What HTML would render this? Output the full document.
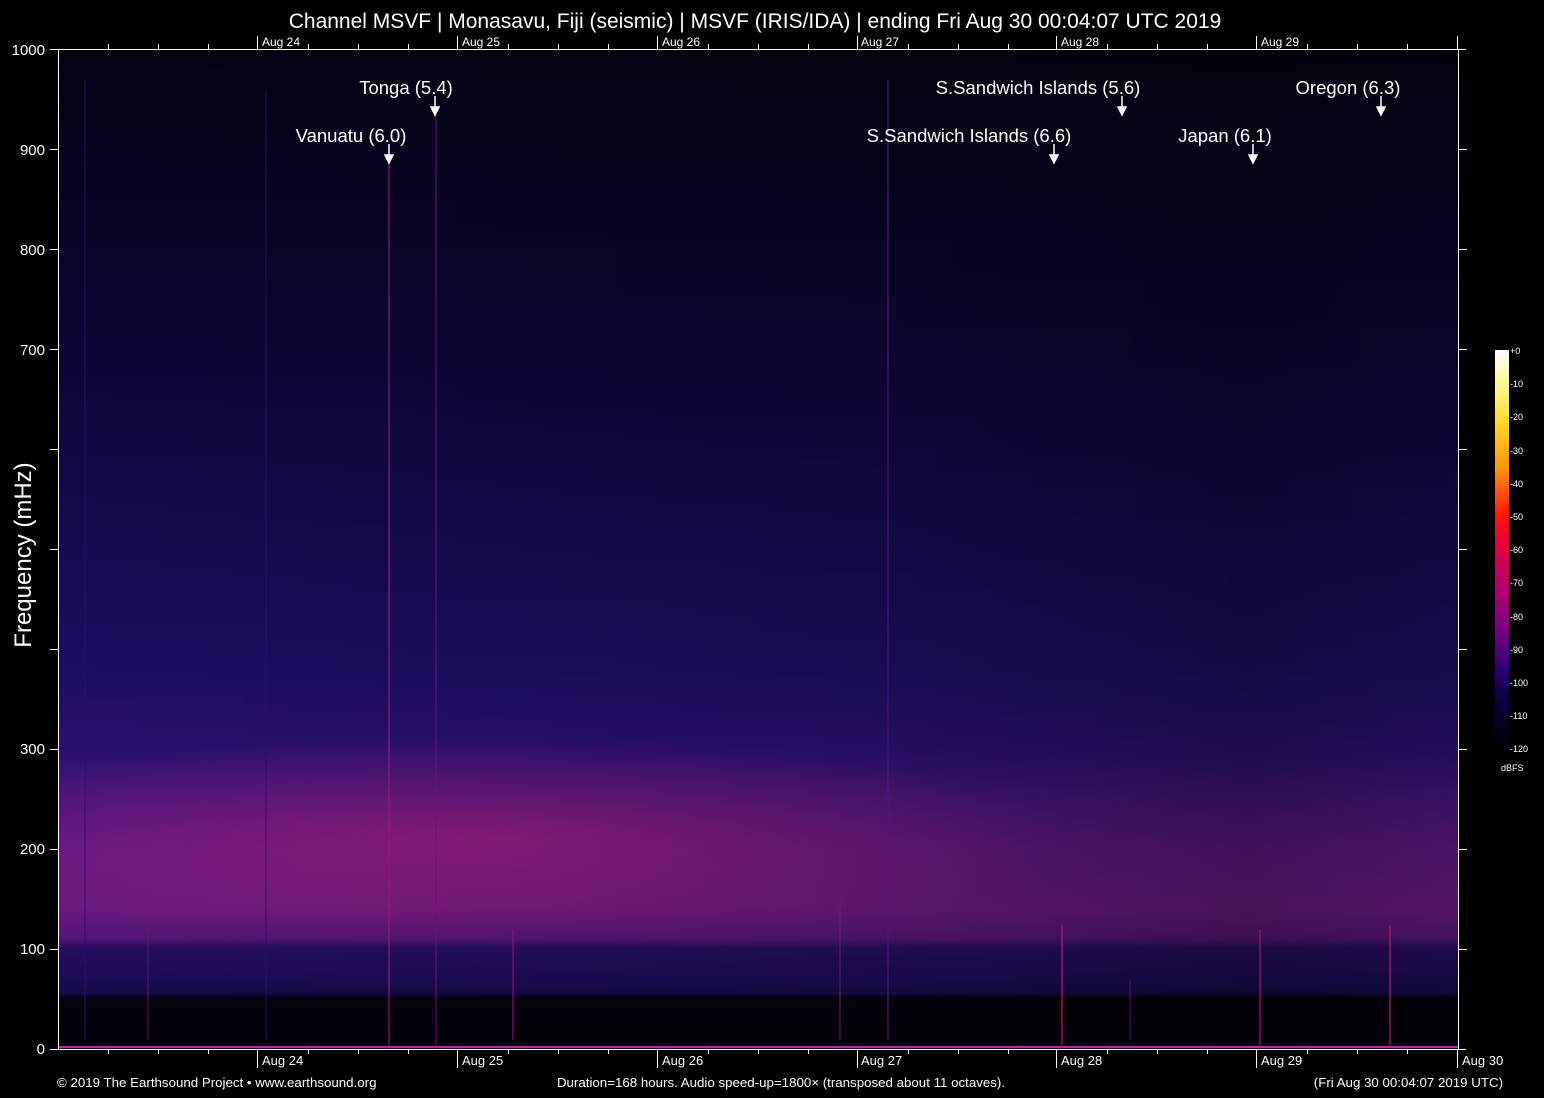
<!DOCTYPE html>
<html><head><meta charset="utf-8"><style>
html,body{margin:0;padding:0;background:#000;}
svg{display:block}
text{font-family:"Liberation Sans",Arial,sans-serif;fill:#fff}
</style></head><body>
<svg width="1544" height="1098" viewBox="0 0 1544 1098" xmlns="http://www.w3.org/2000/svg">
<defs>
<linearGradient id="v" x1="0" y1="0" x2="0" y2="1">
<stop offset="0" stop-color="#030210"/>
<stop offset="0.05" stop-color="#050318"/>
<stop offset="0.3" stop-color="#0b0634"/>
<stop offset="0.5" stop-color="#140b50"/>
<stop offset="0.62" stop-color="#1c0e60"/>
<stop offset="0.7" stop-color="#2a1070"/>
<stop offset="0.75" stop-color="#44167a"/>
<stop offset="0.8" stop-color="#5c1880"/>
<stop offset="0.86" stop-color="#681a7e"/>
<stop offset="0.89" stop-color="#541676"/>
<stop offset="0.9" stop-color="#260e5e"/>
<stop offset="0.93" stop-color="#1c0c56"/>
<stop offset="0.945" stop-color="#160a48"/>
<stop offset="0.95" stop-color="#04020c"/>
<stop offset="1" stop-color="#020108"/>
</linearGradient>
<radialGradient id="r" cx="480" cy="840" r="420" gradientUnits="userSpaceOnUse" gradientTransform="translate(480 840) scale(1.4 0.25) translate(-480 -840)">
<stop offset="0" stop-color="#c0207a" stop-opacity="0.5"/>
<stop offset="1" stop-color="#c0207a" stop-opacity="0"/>
</radialGradient>
<linearGradient id="h" x1="0" y1="0" x2="1" y2="0">
<stop offset="0" stop-color="#000" stop-opacity="0"/>
<stop offset="0.6" stop-color="#000" stop-opacity="0.15"/>
<stop offset="0.85" stop-color="#000" stop-opacity="0.3"/>
<stop offset="1" stop-color="#000" stop-opacity="0.2"/>
</linearGradient>
<linearGradient id="cb" x1="0" y1="0" x2="0" y2="1">
<stop offset="0" stop-color="#ffffff"/>
<stop offset="0.1" stop-color="#fff680"/>
<stop offset="0.2" stop-color="#ffd020"/>
<stop offset="0.3" stop-color="#ff9010"/>
<stop offset="0.42" stop-color="#ff1010"/>
<stop offset="0.5" stop-color="#e00040"/>
<stop offset="0.6" stop-color="#b00070"/>
<stop offset="0.7" stop-color="#780080"/>
<stop offset="0.8" stop-color="#300070"/>
<stop offset="0.88" stop-color="#080040"/>
<stop offset="1" stop-color="#000000"/>
</linearGradient>
</defs>
<text x="755" y="28" font-size="21" text-anchor="middle">Channel MSVF | Monasavu, Fiji (seismic) | MSVF (IRIS/IDA) | ending Fri Aug 30 00:04:07 UTC 2019</text>
<rect x="58" y="49" width="1400" height="999" fill="url(#v)"/>
<rect x="58" y="700" width="1400" height="250" fill="url(#r)"/>
<rect x="58" y="49" width="1400" height="999" fill="url(#h)"/>
<g stroke-width="1.5">
<line x1="389" y1="150" x2="389" y2="1045" stroke="#a01470" opacity="0.8"/>
<line x1="436" y1="110" x2="436" y2="1045" stroke="#6a1280" opacity="0.7"/>
<line x1="888" y1="80" x2="888" y2="1040" stroke="#5a1280" opacity="0.7"/>
<line x1="85" y1="80" x2="85" y2="1040" stroke="#2a1070" opacity="0.6"/>
<line x1="266" y1="90" x2="266" y2="1040" stroke="#2a1070" opacity="0.6"/>
<line x1="513" y1="930" x2="513" y2="1040" stroke="#8a1878" opacity="0.7"/>
<line x1="148" y1="930" x2="148" y2="1040" stroke="#6a1478" opacity="0.6"/>
<line x1="840" y1="900" x2="840" y2="1040" stroke="#7a1878" opacity="0.6"/>
<line x1="1062" y1="925" x2="1062" y2="1045" stroke="#b02070" opacity="0.8"/>
<line x1="1260" y1="930" x2="1260" y2="1045" stroke="#9a1a78" opacity="0.8"/>
<line x1="1390" y1="925" x2="1390" y2="1045" stroke="#b02070" opacity="0.8"/>
<line x1="1130" y1="980" x2="1130" y2="1040" stroke="#5a1280" opacity="0.6"/>
</g>
<line x1="58" y1="1047" x2="1458" y2="1047" stroke="#c020c0" stroke-width="2"/>
<g stroke="#fff" stroke-width="1" fill="none">
<line x1="58.5" y1="49" x2="58.5" y2="1049"/>
<line x1="1458.5" y1="49" x2="1458.5" y2="1049"/>
<line x1="58" y1="49.5" x2="1466" y2="49.5"/>
<line x1="50" y1="1049.5" x2="1466" y2="1049.5"/>
<path d="M50 49.5h8M50 149.5h8M50 249.5h8M50 349.5h8M50 449.5h8M50 549.5h8M50 649.5h8M50 749.5h8M50 849.5h8M50 949.5h8M1458 149.5h9M1458 249.5h9M1458 349.5h9M1458 449.5h9M1458 549.5h9M1458 649.5h9M1458 749.5h9M1458 849.5h9M1458 949.5h9"/>
<path d="M108.5 1049v5M158.5 1049v5M208.5 1049v5M308.5 1049v5M358.5 1049v5M408.5 1049v5M508.5 1049v5M558.5 1049v5M608.5 1049v5M708.5 1049v5M758.5 1049v5M808.5 1049v5M908.5 1049v5M958.5 1049v5M1008.5 1049v5M1107.5 1049v5M1157.5 1049v5M1207.5 1049v5M1307.5 1049v5M1357.5 1049v5M1407.5 1049v5"/>
<path d="M257.5 1049v19M457.5 1049v19M657.5 1049v19M857.5 1049v19M1056.5 1049v19M1256.5 1049v19M1457.5 1049v19"/>
<path d="M108.5 49v-5M158.5 49v-5M208.5 49v-5M308.5 49v-5M358.5 49v-5M408.5 49v-5M508.5 49v-5M558.5 49v-5M608.5 49v-5M708.5 49v-5M758.5 49v-5M808.5 49v-5M908.5 49v-5M958.5 49v-5M1008.5 49v-5M1107.5 49v-5M1157.5 49v-5M1207.5 49v-5M1307.5 49v-5M1357.5 49v-5M1407.5 49v-5"/>
<path d="M257.5 49v-13M457.5 49v-13M657.5 49v-13M857.5 49v-13M1056.5 49v-13M1256.5 49v-13M1457.5 49v-13"/>
</g>
<g font-size="15" text-anchor="end">
<text x="45" y="55">1000</text><text x="45" y="155">900</text><text x="45" y="255">800</text><text x="45" y="355">700</text>
<text x="45" y="754">300</text><text x="45" y="854">200</text><text x="45" y="954">100</text><text x="45" y="1054">0</text>
</g>
<text transform="translate(31 555) rotate(-90)" font-size="24" text-anchor="middle">Frequency (mHz)</text>
<g font-size="12">
<text x="262" y="46">Aug 24</text><text x="462" y="46">Aug 25</text><text x="662" y="46">Aug 26</text><text x="861" y="46">Aug 27</text><text x="1061" y="46">Aug 28</text><text x="1261" y="46">Aug 29</text>
</g>
<g font-size="13">
<text x="262" y="1065">Aug 24</text><text x="462" y="1065">Aug 25</text><text x="662" y="1065">Aug 26</text><text x="861" y="1065">Aug 27</text><text x="1061" y="1065">Aug 28</text><text x="1261" y="1065">Aug 29</text><text x="1462" y="1065">Aug 30</text>
</g>
<g font-size="13.3">
<text x="57" y="1087">© 2019 The Earthsound Project • www.earthsound.org</text>
<text x="781" y="1087" text-anchor="middle">Duration=168 hours. Audio speed-up=1800× (transposed about 11 octaves).</text>
<text x="1503" y="1087" text-anchor="end">(Fri Aug 30 00:04:07 2019 UTC)</text>
</g>
<g font-size="18.5" text-anchor="middle">
<text x="406" y="94">Tonga (5.4)</text>
<text x="351" y="142">Vanuatu (6.0)</text>
<text x="1038" y="94">S.Sandwich Islands (5.6)</text>
<text x="1348" y="94">Oregon (6.3)</text>
<text x="969" y="142">S.Sandwich Islands (6.6)</text>
<text x="1225" y="142">Japan (6.1)</text>
</g>
<g fill="#fff" stroke="#fff" stroke-width="1.5">
<line x1="435" y1="96" x2="435" y2="108"/><path d="M431 107h8l-4 8z"/>
<line x1="1122" y1="96" x2="1122" y2="108"/><path d="M1118 107h8l-4 8z"/>
<line x1="1381" y1="96" x2="1381" y2="108"/><path d="M1377 107h8l-4 8z"/>
<line x1="389" y1="144" x2="389" y2="156"/><path d="M385 155h8l-4 8z"/>
<line x1="1054" y1="144" x2="1054" y2="156"/><path d="M1050 155h8l-4 8z"/>
<line x1="1253" y1="144" x2="1253" y2="156"/><path d="M1249 155h8l-4 8z"/>
</g>
<rect x="1495" y="350" width="14" height="398" fill="url(#cb)"/>
<g font-size="9" fill="#ddd">
<text x="1510" y="354">+0</text><text x="1510" y="387">-10</text><text x="1510" y="420">-20</text><text x="1510" y="454">-30</text><text x="1510" y="487">-40</text><text x="1510" y="520">-50</text><text x="1510" y="553">-60</text><text x="1510" y="586">-70</text><text x="1510" y="620">-80</text><text x="1510" y="653">-90</text><text x="1510" y="686">-100</text><text x="1510" y="719">-110</text><text x="1510" y="752">-120</text>
<text x="1501" y="771">dBFS</text>
</g>
</svg>
</body></html>
